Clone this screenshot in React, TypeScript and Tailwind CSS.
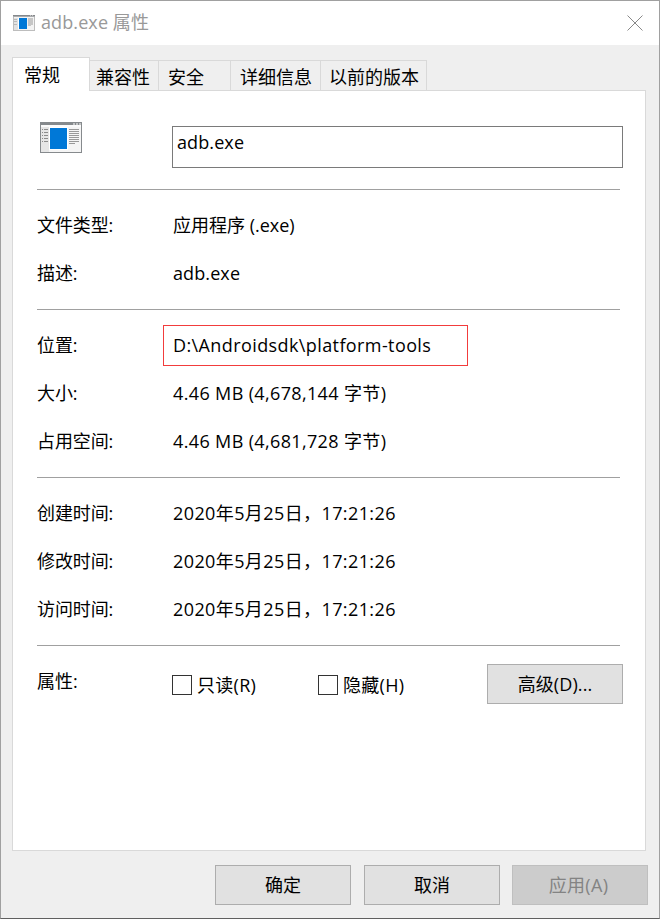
import { Fragment } from "react";

const tabs = [
  { label: "兼容性", width: "w-[69px] pl-[6px]" },
  { label: "安全", width: "w-[72px] pl-[9px]" },
  { label: "详细信息", width: "w-[90px] pl-[9px]" },
  { label: "以前的版本", width: "w-[106px] pl-[8px]" },
];

const sections = [
  [
    { label: "文件类型:", value: "应用程序 (.exe)", track: "tracking-[0px]" },
    { label: "描述:", value: "adb.exe", track: "tracking-[0.1px]" },
  ],
  [
    { label: "位置:", value: "D:\\Androidsdk\\platform-tools", track: "tracking-[0.4px]", marked: true },
    { label: "大小:", value: "4.46 MB (4,678,144 字节)", track: "tracking-[0.36px]" },
    { label: "占用空间:", value: "4.46 MB (4,681,728 字节)", track: "tracking-[0.36px]" },
  ],
  [
    { label: "创建时间:", value: "2020年5月25日，17:21:26", track: "tracking-[0.4px]" },
    { label: "修改时间:", value: "2020年5月25日，17:21:26", track: "tracking-[0.4px]" },
    { label: "访问时间:", value: "2020年5月25日，17:21:26", track: "tracking-[0.4px]" },
  ],
];

function SmallAppIcon() {
  return (
    <svg width="22" height="16" viewBox="0 0 22 16" shapeRendering="crispEdges">
      <rect width="22" height="16" fill="#bdbdbd" />
      <rect x="1" y="2" width="20" height="13" fill="#f3f3f3" />
      <rect width="22" height="1" fill="#85888b" />
      <rect y="1" width="22" height="1" fill="#a9abad" />
      <rect x="17" width="1" height="1" fill="#c4c4c4" />
      <rect x="19" width="1" height="1" fill="#c4c4c4" />
      <rect x="1" y="3" width="4" height="12" fill="#e2e2e2" />
      <path d="M1 4.5h3M1 6.5h3M1 9.5h3" stroke="#b9b9b9" />
      <rect x="5" y="3" width="9" height="11" fill="#fff" />
      <rect x="6" y="3" width="8" height="11" fill="#0078d7" />
      <path d="M15 3h5v7h-2v1h-3z" fill="#c6c6c6" />
    </svg>
  );
}

function AppIcon() {
  return (
    <svg width="42" height="31" viewBox="0 0 42 31" shapeRendering="crispEdges">
      <rect width="42" height="31" fill="#868a8d" />
      <rect x="1" y="3" width="40" height="27" fill="#f5f5f5" />
      <rect x="1" y="3" width="40" height="2" fill="#fbfbfb" />
      <rect x="1" y="5" width="8" height="25" fill="#e6e6e6" />
      <path d="M33 1h2v2h-2zM36 1h2v2h-2zM39 1h2v2h-2z" fill="#c3c5c6" />
      <path
        d="M2 7.5h1M4 7.5h4M2 10.5h1M4 10.5h4M2 13.5h1M4 13.5h4M2 16.5h1M4 16.5h4M2 19.5h1M4 19.5h4"
        stroke="#8c8c8c"
      />
      <rect x="9" y="5" width="19" height="23" fill="#fff" />
      <rect x="10" y="6" width="17" height="21" fill="#0078d7" />
      <path
        d="M29 7.5h10M29 9.5h10M29 11.5h10M29 13.5h10M29 15.5h10M29 17.5h10M29 19.5h10M29 21.5h6"
        stroke="#999"
      />
    </svg>
  );
}

function Check({ label }: { label: string }) {
  return (
    <label className="flex w-[146px] items-center">
      <span className="h-5 w-5 border border-[#333] bg-white" />
      <span className="pl-[5px] tracking-[0.3px]">{label}</span>
    </label>
  );
}

export default function App() {
  return (
    <div className="flex h-[919px] w-[660px] flex-col border border-[#a0a0a0] border-b-[#5f5f5f] bg-[#efefef] font-['Open_Sans','Noto_Sans_CJK_SC',sans-serif] text-[18px] leading-6 whitespace-nowrap text-black">
      <header className="flex h-11 items-center bg-white pr-4 pl-3 text-[#999]">
        <SmallAppIcon />
        <h1 className="-mt-0.5 flex-1 pl-[6px] tracking-[0.1px]">adb.exe 属性</h1>
        <svg className="-mt-px" width="16" height="16" viewBox="0 0 16 16" stroke="#888" fill="none">
          <path d="M.5.5l15 15M15.5.5l-15 15" />
        </svg>
      </header>

      <nav className="mt-3 flex h-[33px] items-end pl-[11px]">
        <div className="z-10 -mb-px h-[34px] w-[78px] border border-b-0 border-[#d9d9d9] bg-white pt-[5px] pl-[11px]">
          常规
        </div>
        {tabs.map((tab) => (
          <div
            key={tab.label}
            className={`h-[30px] border-t border-r border-[#d9d9d9] pt-[4px] ${tab.width}`}
          >
            {tab.label}
          </div>
        ))}
      </nav>

      <main className="mx-[11px] mr-[13px] h-[761px] border border-[#d9d9d9] bg-white pr-[25px] pl-6">
        <div className="flex h-[98px]">
          <div className="w-[135px] pt-[31px] pl-[3px]">
            <AppIcon />
          </div>
          <div className="mt-[35px] -mr-[3px] h-[42px] flex-1 border border-[#7a7a7a] pt-[3px] pl-1 tracking-[0.1px]">
            adb.exe
          </div>
        </div>

        {sections.map((rows, i) => (
          <Fragment key={i}>
            <hr className="border-[#a0a0a0]" />
            <div className="pt-[11px] pb-3">
              {rows.map((row) => (
                <div key={row.label} className="flex h-12 items-center">
                  <span className="w-[126px] tracking-[-0.1px]">{row.label}</span>
                  <span
                    className={`flex items-center border pl-[9px] ${row.track} ${
                      row.marked ? "h-[41px] w-[305px] border-[#f23c3c]" : "border-transparent"
                    }`}
                  >
                    {row.value}
                  </span>
                </div>
              ))}
            </div>
          </Fragment>
        ))}

        <hr className="border-[#a0a0a0]" />
        <div className="flex pt-[18px]">
          <span className="w-[135px] pt-[5px]">属性:</span>
          <div className="flex h-[42px] flex-1 items-center">
            <Check label="只读(R)" />
            <Check label="隐藏(H)" />
          </div>
          <button className="-mr-[3px] h-10 w-[136px] border border-[#adadad] bg-[#e1e1e1] tracking-[0.1px]">
            高级(D)...
          </button>
        </div>
      </main>

      <footer className="mt-[14px] flex justify-end pr-[11px]">
        <button className="mr-[13px] h-10 w-[136px] border border-[#adadad] bg-[#e1e1e1]">
          确定
        </button>
        <button className="mr-3 h-10 w-[136px] border border-[#adadad] bg-[#e1e1e1]">
          取消
        </button>
        <button
          disabled
          className="h-10 w-[136px] border border-[#bfbfbf] bg-[#ccc] pr-[3px] tracking-[0.3px] text-[#838383]"
        >
          应用(A)
        </button>
      </footer>
    </div>
  );
}
